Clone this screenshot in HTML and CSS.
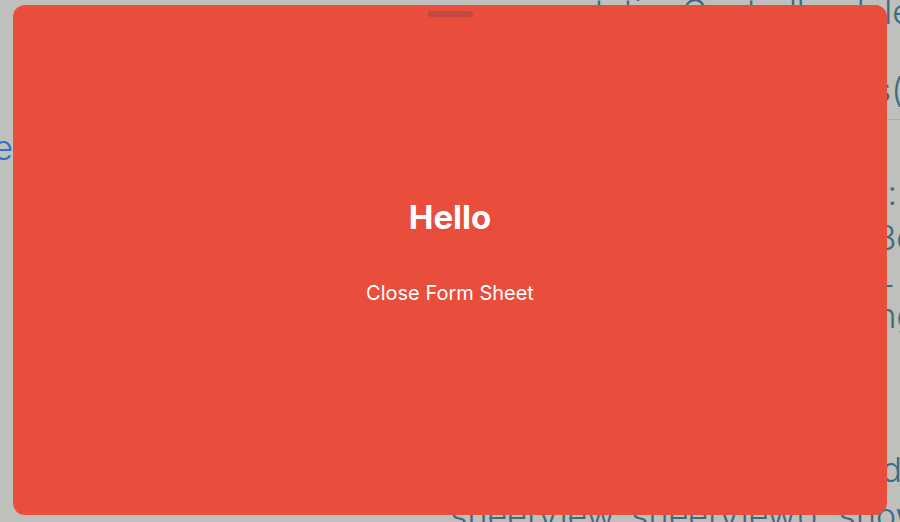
FILE: index.html
```html
<!DOCTYPE html>
<html>
<head>
<meta charset="utf-8">
<link rel="stylesheet" href="styles.css">
</head>
<body>
<div class="backdrop">
  <div class="line l1">presentationController.dele</div>
  <div class="line l2">sheetPresentationControllers(</div>
  <div class="rule"></div>
  <div class="line blue"><span>Tap here</span></div>
  <div class="line l4">detents:</div>
  <div class="line l5">.mediumBe</div>
  <div class="line l6">prefers -</div>
  <div class="line l7">grabbing</div>
  <div class="line l8">added</div>
  <div class="line l9">sheetView. sheetView(). shows</div>
</div>
<div class="sheet">
  <div class="grabber"></div>
  <div class="content">
    <h1 class="title">Hello</h1>
    <div class="close">Close Form Sheet</div>
  </div>
</div>
</body>
</html>
```

FILE: styles.css
```css
html, body {
  margin: 0;
  padding: 0;
}
body {
  width: 900px;
  height: 522px;
  overflow: hidden;
  background: #bec0bc;
  font-family: Inter, "Noto Sans", sans-serif;
  position: relative;
}
.backdrop {
  display: flex;
  flex-direction: column;
  width: 900px;
  height: 522px;
  color: #3f6b7c;
  font-size: 34px;
  font-weight: 300;
}
.line {
  flex: none;
  white-space: nowrap;
  text-align: right;
  height: 40px;
  line-height: 40px;
}
.l1 { margin-top: -8px; margin-right: -12px; }
.l2 { margin-top: 38px; margin-right: -3px; }
.rule {
  flex: none;
  margin-top: 9px;
  margin-left: 440px;
  height: 1px;
  background: #a9aba8;
}
.blue {
  color: #2f6fd1;
  align-self: flex-start;
  width: 13px;
  display: flex;
  justify-content: flex-end;
  margin-top: 8px;
}
.l4 { margin-top: 5px; margin-right: 3px; }
.l5 { margin-top: 5px; margin-right: -16px; }
.l6 { margin-top: 12px; margin-right: 5px; height: 30px; line-height: 30px; }
.l7 { margin-top: 1px; margin-right: -17px; height: 30px; line-height: 30px; }
.l8 { margin-top: 119px; margin-right: -2px; }
.l9 { margin-top: 6px; text-align: left; margin-left: 450px; }

.sheet {
  position: absolute;
  left: 13px;
  top: 5px;
  width: 874px;
  height: 510px;
  border-radius: 12px;
  background: #e94e3c;
  display: flex;
  flex-direction: column;
  align-items: center;
}
.grabber {
  margin-top: 6px;
  width: 45px;
  height: 6px;
  border-radius: 3px;
  background: #c24840;
}
.content {
  display: flex;
  flex-direction: column;
  align-items: center;
  margin-top: 180px;
  color: #fff;
}
.title {
  margin: 0;
  font-size: 33px;
  font-weight: 700;
  line-height: 40px;
}
.close {
  margin-top: 44px;
  font-size: 20px;
  line-height: 24px;
}
```
